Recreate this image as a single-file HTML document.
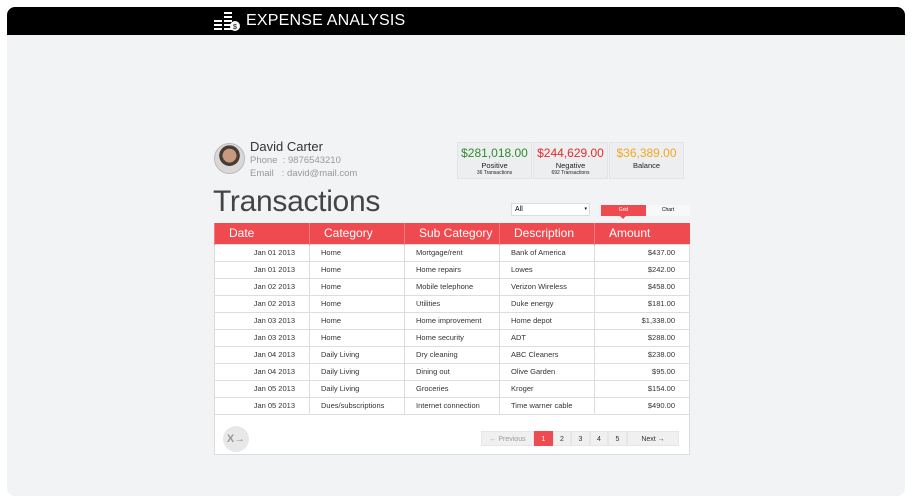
<!DOCTYPE html>
<html><head><style>
*{box-sizing:border-box;margin:0;padding:0}
body{width:912px;height:504px;background:#fff;font-family:"Liberation Sans",sans-serif;position:relative;overflow:hidden}
.frame{position:absolute;left:7px;top:7px;width:898px;height:489px;background:#f2f3f5;border-radius:8px;overflow:hidden}
.hdr{height:28px;background:#000;color:#fff;font-size:16px;line-height:28px;padding-left:239px;position:relative;letter-spacing:0.2px}
.abs{position:absolute}
table{border-collapse:collapse;position:absolute;left:207px;top:216px;width:476px;background:#fff;font-size:7.5px;color:#333}
th{background:#ef4a4f;color:#fff;font-weight:normal;font-size:12px;text-align:left;padding-left:14px;height:21px;border-left:1px solid #f47a7e}
td{height:17px;border:1px solid #ddd;padding-left:11px;width:95px}
td.r{text-align:right;padding-right:14px}
.card{position:absolute;top:135px;height:37px;width:75px;background:#eceef0;border:1px solid #e2e4e6;text-align:center;font-size:7.5px;color:#222}
.card b{display:block;font-weight:normal;font-size:12px;margin-top:3px;margin-bottom:1px}
.pg{position:absolute;top:424px;height:15px;background:#f0f0f0;font-size:7px;color:#333;text-align:center;line-height:15px;border:1px solid #e6e6e6}
</style></head><body>
<div class="frame">
<div class="hdr">
<svg class="abs" style="left:206px;top:4px" width="28" height="20" viewBox="0 0 28 20" fill="#fff"><rect x="1" y="9" width="8" height="2"/><rect x="1" y="13" width="8" height="2"/><rect x="1" y="17" width="8" height="2"/><rect x="11" y="1" width="8" height="2"/><rect x="11" y="5" width="8" height="2"/><rect x="11" y="9" width="8" height="2"/><rect x="11" y="13" width="8" height="2"/><rect x="11" y="17" width="8" height="2"/><circle cx="22" cy="15" r="5"/><text x="22" y="18" font-size="7" fill="#000" text-anchor="middle">$</text></svg>
EXPENSE ANALYSIS</div>
<div class="abs" style="left:207px;top:136px;width:31px;height:31px;border-radius:50%;background:radial-gradient(circle at 50% 40%,#c79a80 0 30%,#4a3b33 31% 45%,#d8d8d8 46%);border:1.5px solid #bbb"></div>
<div class="abs" style="left:243px;top:132px;font-size:13px;color:#333">David Carter</div>
<div class="abs" style="left:243px;top:148px;font-size:9.5px;color:#999">Phone &nbsp;: 9876543210</div>
<div class="abs" style="left:243px;top:161px;font-size:9.5px;color:#999">Email &nbsp;&nbsp;: david@mail.com</div>
<div class="card" style="left:450px"><b style="color:#2e8b2e">$281,018.00</b>Positive<div style="font-size:5px">36 Transactions</div></div>
<div class="card" style="left:526px"><b style="color:#e52a2a">$244,629.00</b>Negative<div style="font-size:5px">692 Transactions</div></div>
<div class="card" style="left:602px"><b style="color:#f5a623">$36,389.00</b>Balance</div>
<div class="abs" style="left:206px;top:178px;font-size:30px;color:#444;letter-spacing:-0.3px">Transactions</div>
<div class="abs" style="left:504px;top:196px;width:79px;height:13px;background:#fff;border:1px solid #ddd;font-size:7px;padding-left:3px;line-height:11px">All<span style="float:right;padding-right:2px;font-size:5px">▾</span></div>
<div class="abs" style="left:594px;top:198px;width:45px;height:11px;background:#ef4a4f;color:#fff;font-size:5px;text-align:center;line-height:11px">Grid</div>
<div class="abs" style="left:613px;top:209px;border:3px solid transparent;border-top-color:#ef4a4f"></div>
<div class="abs" style="left:639px;top:198px;width:44px;height:11px;background:#f8f8f8;font-size:5px;text-align:center;line-height:11px">Chart</div>
<div class="abs" style="left:207px;top:406px;width:476px;height:42px;background:#fff;border:1px solid #ddd;border-top:none"></div>
<table>
<tr><th>Date</th><th>Category</th><th>Sub Category</th><th>Description</th><th>Amount</th></tr>
<tr><td class="r">Jan 01 2013</td><td>Home</td><td>Mortgage/rent</td><td>Bank of America</td><td class="r">$437.00</td></tr>
<tr><td class="r">Jan 01 2013</td><td>Home</td><td>Home repairs</td><td>Lowes</td><td class="r">$242.00</td></tr>
<tr><td class="r">Jan 02 2013</td><td>Home</td><td>Mobile telephone</td><td>Verizon Wireless</td><td class="r">$458.00</td></tr>
<tr><td class="r">Jan 02 2013</td><td>Home</td><td>Utilities</td><td>Duke energy</td><td class="r">$181.00</td></tr>
<tr><td class="r">Jan 03 2013</td><td>Home</td><td>Home improvement</td><td>Home depot</td><td class="r">$1,338.00</td></tr>
<tr><td class="r">Jan 03 2013</td><td>Home</td><td>Home security</td><td>ADT</td><td class="r">$288.00</td></tr>
<tr><td class="r">Jan 04 2013</td><td>Daily Living</td><td>Dry cleaning</td><td>ABC Cleaners</td><td class="r">$238.00</td></tr>
<tr><td class="r">Jan 04 2013</td><td>Daily Living</td><td>Dining out</td><td>Olive Garden</td><td class="r">$95.00</td></tr>
<tr><td class="r">Jan 05 2013</td><td>Daily Living</td><td>Groceries</td><td>Kroger</td><td class="r">$154.00</td></tr>
<tr><td class="r">Jan 05 2013</td><td>Dues/subscriptions</td><td>Internet connection</td><td>Time warner cable</td><td class="r">$490.00</td></tr>
</table>
<div class="abs" style="left:216px;top:419px;width:26px;height:26px;border-radius:50%;background:#e8e8e8;color:#999;font-size:11px;font-weight:bold;text-align:center;line-height:26px">X→</div>
<div class="pg" style="left:474px;width:53px;color:#999">← Previous</div>
<div class="pg" style="left:527px;width:19px;background:#ef4a4f;color:#fff;border-color:#ef4a4f">1</div>
<div class="pg" style="left:546px;width:18px">2</div>
<div class="pg" style="left:564px;width:19px">3</div>
<div class="pg" style="left:583px;width:18px">4</div>
<div class="pg" style="left:601px;width:19px">5</div>
<div class="pg" style="left:620px;width:52px">Next →</div>
</div>
</body></html>
